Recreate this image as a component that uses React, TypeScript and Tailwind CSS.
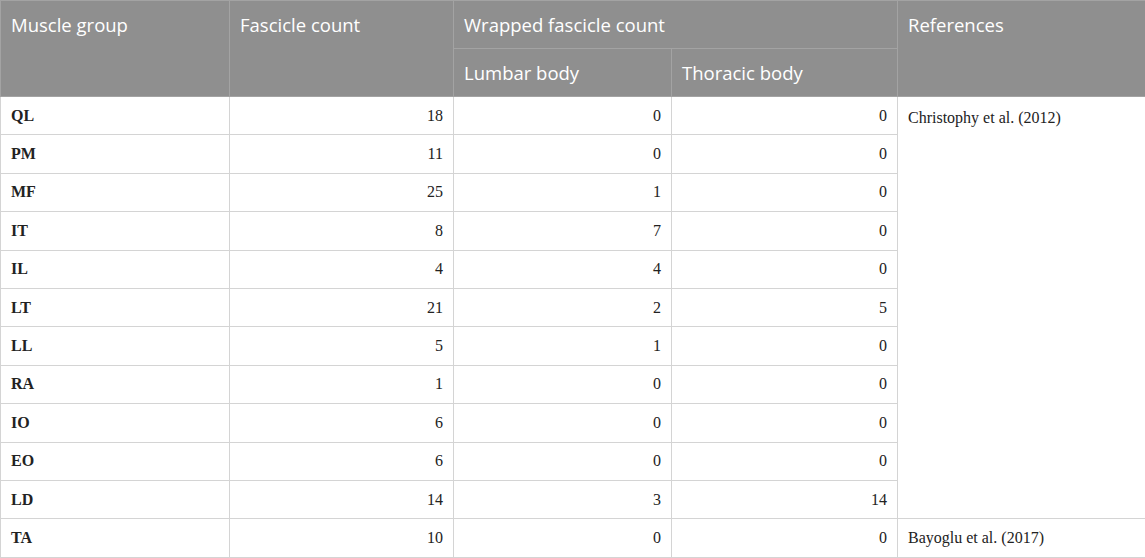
const rows: [string, number, number, number][] = [
  ['QL', 18, 0, 0],
  ['PM', 11, 0, 0],
  ['MF', 25, 1, 0],
  ['IT', 8, 7, 0],
  ['IL', 4, 4, 0],
  ['LT', 21, 2, 5],
  ['LL', 5, 1, 0],
  ['RA', 1, 0, 0],
  ['IO', 6, 0, 0],
  ['EO', 6, 0, 0],
  ['LD', 14, 3, 14],
]

const th = 'border border-[#a3a3a3] bg-[#8f8f8f] text-left align-top font-normal text-white px-[10px] pt-[12px]'
const td = 'border border-[#d4d4d4] px-[10px] h-[38.4px] text-[16px] text-[#222]'

export default function App() {
  return (
    <div className="w-[1145px] h-[558px] bg-white overflow-hidden">
      <table className="w-[1145px] table-fixed border-collapse border border-[#d4d4d4] font-['Liberation_Serif',serif]">
        <colgroup>
          <col className="w-[229px]" />
          <col className="w-[224px]" />
          <col className="w-[218px]" />
          <col className="w-[226px]" />
          <col className="w-[248px]" />
        </colgroup>
        <thead className="font-['Open_Sans',sans-serif] text-[18.5px] leading-[24px]">
          <tr className="h-[48px]">
            <th rowSpan={2} className={th}>Muscle group</th>
            <th rowSpan={2} className={th}>Fascicle count</th>
            <th colSpan={2} className={th}>Wrapped fascicle count</th>
            <th rowSpan={2} className={th}>References</th>
          </tr>
          <tr className="h-[48px]">
            <th className={th}>Lumbar body</th>
            <th className={th}>Thoracic body</th>
          </tr>
        </thead>
        <tbody>
          {rows.map((r, i) => (
            <tr key={r[0]}>
              <td className={`${td} font-bold`}>{r[0]}</td>
              <td className={`${td} text-right`}>{r[1]}</td>
              <td className={`${td} text-right`}>{r[2]}</td>
              <td className={`${td} text-right`}>{r[3]}</td>
              {i === 0 && (
                <td rowSpan={11} className={`${td} align-top pt-[9px]`}>
                  Christophy et al. (2012)
                </td>
              )}
            </tr>
          ))}
          <tr>
            <td className={`${td} font-bold`}>TA</td>
            <td className={`${td} text-right`}>10</td>
            <td className={`${td} text-right`}>0</td>
            <td className={`${td} text-right`}>0</td>
            <td className={td}>Bayoglu et al. (2017)</td>
          </tr>
        </tbody>
      </table>
    </div>
  )
}
